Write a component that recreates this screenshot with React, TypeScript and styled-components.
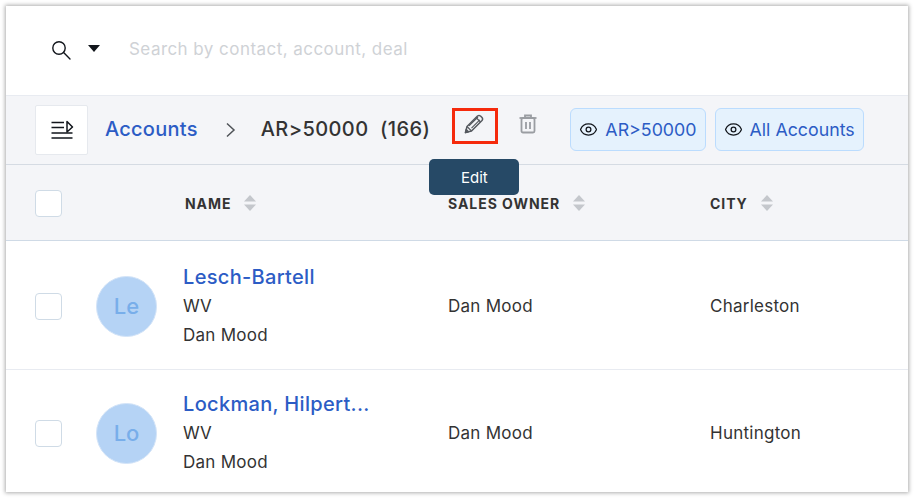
import { Eye } from "lucide-react";
import styled, { createGlobalStyle } from "styled-components";

const accounts = [
  { initials: "Le", name: "Lesch-Bartell", state: "WV", owner: "Dan Mood", city: "Charleston" },
  { initials: "Lo", name: "Lockman, Hilpert...", state: "WV", owner: "Dan Mood", city: "Huntington" },
];

const columns = ["NAME", "SALES OWNER", "CITY"];

const SearchIcon = () => (
  <svg width="20" height="20" viewBox="0 0 20 20" fill="none" stroke="#12161c" strokeWidth="1.4">
    <circle cx="8" cy="8" r="6.2" />
    <path d="M12.6 12.6 L19 19" strokeLinecap="round" />
  </svg>
);

const SortIcon = () => (
  <SortSvg width="12" height="18" viewBox="0 0 12 18">
    <path d="M6 1 L12 7.5 H0 Z" fill="#c4c7cc" />
    <path d="M6 17 L12 10.5 H0 Z" fill="#c4c7cc" />
  </SortSvg>
);

const ListIcon = () => (
  <svg width="24" height="24" viewBox="0 0 24 24" fill="none" stroke="#12161c" strokeWidth="1.4">
    <path d="M1.5 4.5 H14 M1.5 9.5 H14 M1.5 15 H22.5 M1.5 20 H22.5" />
    <path d="M17 3.5 L22.5 9 L17 14 Z" strokeLinejoin="round" strokeWidth="1.5" />
  </svg>
);

const PencilIcon = () => (
  <PencilSvg width="20" height="20" viewBox="0 0 20 20" fill="none" stroke="#55595f" strokeWidth="1.5" strokeLinejoin="round">
    <path d="M1.5 18.5 L3 12.5 L13.5 2 Q15 0.8 16.5 2 L18 3.5 Q19.2 5 18 6.5 L7.5 17 Z" />
    <path d="M3 12.5 L7.5 17 M12 3.5 L16.5 8 M5 11.8 L14 3 M7.5 14.2 L15.8 5.8" strokeWidth="1.1" />
    <path d="M1.5 18.5 L2.2 15.6 L4.4 17.8 Z" fill="#55595f" />
  </PencilSvg>
);

const TrashIcon = () => (
  <svg width="18" height="20" viewBox="0 0 18 20" fill="none" stroke="#9a9da2" strokeWidth="1.8">
    <path d="M0.5 4 H17.5" />
    <path d="M6 4 V1.5 H12 V4" />
    <rect x="2.5" y="4" width="13" height="14.5" rx="1.5" />
    <path d="M7 8 V15 M11 8 V15" />
  </svg>
);

const App = () => (
  <Page>
    <GlobalStyle />
    <Window>
      <SearchBar>
        <SearchIcon />
        <Caret />
        <SearchHint>Search by contact, account, deal</SearchHint>
      </SearchBar>
      <Toolbar>
        <MenuButton>
          <ListIcon />
        </MenuButton>
        <Crumb>Accounts</Crumb>
        <Chevron width="11" height="16" viewBox="0 0 11 16" fill="none" stroke="#4f5358" strokeWidth="1.5">
          <path d="M2 1.5 L9 8 L2 14.5" />
        </Chevron>
        <ViewTitle>AR&gt;50000&nbsp; (166)</ViewTitle>
        <EditButton>
          <PencilIcon />
          <Tooltip>Edit</Tooltip>
        </EditButton>
        <TrashButton>
          <TrashIcon />
        </TrashButton>
        <Chips>
          <Chip>
            <Eye size={19} strokeWidth={1.6} color="#12161c" />
            AR&gt;50000
          </Chip>
          <Chip>
            <Eye size={19} strokeWidth={1.6} color="#12161c" />
            All Accounts
          </Chip>
        </Chips>
      </Toolbar>
      <HeadRow>
        <Checkbox />
        <span />
        {columns.map((label, index) => (
          <HeadCell key={label} $indent={index === 0 ? 2 : 0}>
            {label}
            <SortIcon />
          </HeadCell>
        ))}
      </HeadRow>
      {accounts.map((account, index) => (
        <Row key={account.initials} $first={index === 0}>
          <Checkbox />
          <Avatar>{account.initials}</Avatar>
          <NameCell>
            <AccountName>{account.name}</AccountName>
            <Detail>{account.state}</Detail>
            <Detail>{account.owner}</Detail>
          </NameCell>
          <Detail>{account.owner}</Detail>
          <Detail>{account.city}</Detail>
        </Row>
      ))}
    </Window>
  </Page>
);

const GlobalStyle = createGlobalStyle`
  html, body {
    margin: 0;
    background: #fff;
    font-family: Inter, "Liberation Sans", sans-serif;
  }
`;

const Page = styled.div`
  width: 914px;
  height: 499px;
  padding: 6px 6px 7px 6px;
  box-sizing: border-box;
  overflow: hidden;
`;

const Window = styled.div`
  width: 902px;
  height: 486px;
  background: #fff;
  overflow: hidden;
  box-shadow: 0 0 4px 1px rgba(0, 0, 0, 0.32);
`;

const SearchBar = styled.div`
  height: 89px;
  display: flex;
  align-items: center;
  padding: 0 0 1px 45px;
  box-sizing: border-box;
`;

const Caret = styled.span`
  margin-left: 17px;
  width: 0;
  height: 0;
  border-left: 6px solid transparent;
  border-right: 6px solid transparent;
  border-top: 7px solid #12161c;
  margin-bottom: 3px;
`;

const SearchHint = styled.span`
  margin-left: 29px;
  margin-bottom: 3px;
  font-size: 17px;
  letter-spacing: 0.45px;
  color: #cfd2d6;
`;

const Toolbar = styled.div`
  height: 70px;
  display: flex;
  align-items: center;
  padding-left: 29px;
  box-sizing: border-box;
  background: #f4f5f8;
  border-top: 1px solid #e8ebf1;
  border-bottom: 1px solid #d5dbe3;
`;

const MenuButton = styled.div`
  width: 53px;
  height: 50px;
  display: flex;
  align-items: center;
  justify-content: center;
  box-sizing: border-box;
  background: #fff;
  border: 1px solid #e6e9ee;
  border-radius: 2px;
`;

const Crumb = styled.span`
  margin: 0 0 2px 17px;
  font-size: 20px;
  font-weight: 500;
  letter-spacing: 0.25px;
  color: #2c5cc5;
`;

const Chevron = styled.svg`
  margin-left: 27px;
`;

const ViewTitle = styled.span`
  margin: 0 0 2px 25px;
  font-size: 20px;
  font-weight: 500;
  letter-spacing: 0.42px;
  color: #333;
  white-space: nowrap;
`;

const EditButton = styled.div`
  position: relative;
  margin: -8px 0 0 22px;
  width: 46px;
  height: 36px;
  display: flex;
  align-items: center;
  justify-content: center;
  box-sizing: border-box;
  border: 3px solid #f52a0c;
`;

const PencilSvg = styled.svg`
  margin: -4px 2px 0 0;
`;

const Tooltip = styled.div`
  position: absolute;
  top: 48px;
  left: -26px;
  width: 90px;
  height: 36px;
  display: flex;
  align-items: center;
  justify-content: center;
  background: #264966;
  border-radius: 5px;
  color: #fff;
  font-size: 15px;
`;

const TrashButton = styled.div`
  display: flex;
  margin: -12px 0 0 21px;
`;

const Chips = styled.div`
  display: flex;
  gap: 8.5px;
  margin: -2px 0 0 33px;
`;

const Chip = styled.div`
  height: 43px;
  display: flex;
  align-items: center;
  gap: 7px;
  padding: 0 8.5px 0 8px;
  box-sizing: border-box;
  background: #e5f2fd;
  border: 1px solid #bbdcfe;
  border-radius: 6px;
  color: #2c5cc5;
  font-size: 17.8px;
  white-space: nowrap;
`;

const tableGrid = `
  display: grid;
  grid-template-columns: 61px 87px 265px 262px 1fr;
  align-items: center;
  padding-left: 29px;
  box-sizing: border-box;
`;

const HeadRow = styled.div`
  ${tableGrid}
  height: 76px;
  padding-top: 1px;
  background: #f4f5f8;
  border-bottom: 1px solid #cfdae6;
`;

const HeadCell = styled.div<{ $indent: number }>`
  display: flex;
  align-items: center;
  gap: 13px;
  padding-left: ${(props) => props.$indent}px;
  font-size: 14px;
  font-weight: 700;
  letter-spacing: 0.95px;
  color: #333;
`;

const SortSvg = styled.svg`
  flex: none;
`;

const Row = styled.div<{ $first: boolean }>`
  ${tableGrid}
  height: 129px;
  padding-top: ${(props) => (props.$first ? 2 : 0)}px;
  padding-bottom: ${(props) => (props.$first ? 0 : 2)}px;
  background: #fff;
  border-bottom: 1px solid #e8ebf1;
`;

const Checkbox = styled.div`
  width: 26.5px;
  height: 27px;
  box-sizing: border-box;
  background: #fff;
  border: 1px solid #cfdbe6;
  border-radius: 4px;
`;

const Avatar = styled.div`
  width: 61px;
  height: 61px;
  display: flex;
  align-items: center;
  justify-content: center;
  box-sizing: border-box;
  background: #b5d3f5;
  border: 1px solid #d3e4f8;
  border-radius: 50%;
  color: #78aeea;
  font-size: 22px;
  font-weight: 500;
`;

const NameCell = styled.div`
  display: flex;
  flex-direction: column;
  gap: 5px;
`;

const AccountName = styled.div`
  font-size: 20px;
  font-weight: 500;
  letter-spacing: 0.32px;
  color: #2c5cc5;
  white-space: nowrap;
`;

const Detail = styled.div`
  font-size: 17px;
  line-height: 24px;
  letter-spacing: 0.25px;
  color: #333;
`;

export default App;
